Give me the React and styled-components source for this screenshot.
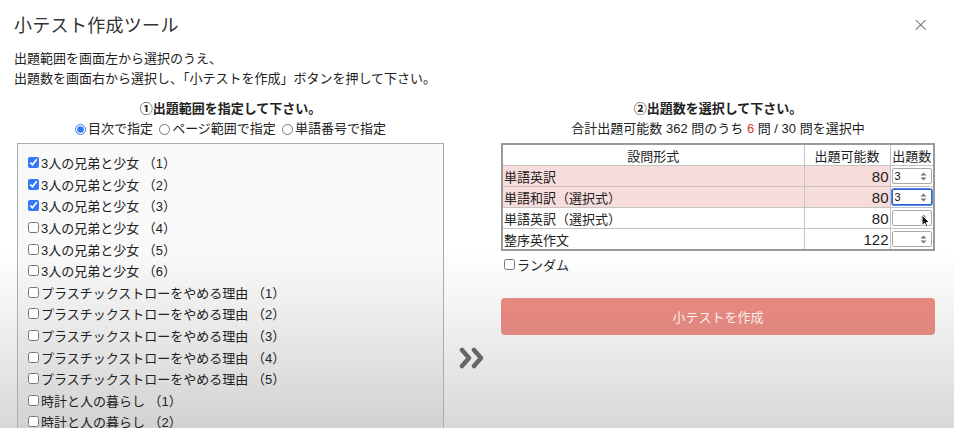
import React from "react";
import styled, { createGlobalStyle } from "styled-components";

const chapters = [
  { label: "3人の兄弟と少女 （1）", checked: true },
  { label: "3人の兄弟と少女 （2）", checked: true },
  { label: "3人の兄弟と少女 （3）", checked: true },
  { label: "3人の兄弟と少女 （4）" },
  { label: "3人の兄弟と少女 （5）" },
  { label: "3人の兄弟と少女 （6）" },
  { label: "プラスチックストローをやめる理由 （1）" },
  { label: "プラスチックストローをやめる理由 （2）" },
  { label: "プラスチックストローをやめる理由 （3）" },
  { label: "プラスチックストローをやめる理由 （4）" },
  { label: "プラスチックストローをやめる理由 （5）" },
  { label: "時計と人の暮らし （1）" },
  { label: "時計と人の暮らし （2）" },
  { label: "時計と人の暮らし （3）" },
];

const questionTypes = [
  { name: "単語英訳", count: 80, value: "3", active: true },
  { name: "単語和訳（選択式）", count: 80, value: "3", active: true, focused: true },
  { name: "単語英訳（選択式）", count: 80, value: "", cursor: true },
  { name: "整序英作文", count: 122, value: "" },
];

const Spinner = () => (
  <svg width="7" height="9" viewBox="0 0 7 9">
    <path d="M3.5 0.5 L6.5 3.5 H0.5 Z" fill="#777" />
    <path d="M3.5 8.5 L6.5 5.5 H0.5 Z" fill="#777" />
  </svg>
);

const Cursor = () => (
  <svg width="10" height="14" viewBox="0 0 10 14">
    <path d="M1 1 L1 11.5 L3.6 9.2 L5.4 13 L7 12.3 L5.3 8.6 L8.6 8.6 Z" fill="#111" stroke="#fff" strokeWidth="1" />
  </svg>
);

const NumberBox = ({ value, focused, cursor }) => (
  <NumberField $focused={focused}>
    <span>{value}</span>
    <Spinner />
    {cursor && (
      <CursorWrap>
        <Cursor />
      </CursorWrap>
    )}
  </NumberField>
);

const App = () => {
  return (
    <>
      <GlobalStyle />
      <Page>
        <Header>
          <Title>小テスト作成ツール</Title>
          <Close>×</Close>
        </Header>

        <Intro>
          出題範囲を画面左から選択のうえ、
          <br />
          出題数を画面右から選択し、「小テストを作成」ボタンを押して下さい。
        </Intro>

        <Columns>
          <SectionHead $area="lhead">
            <Heading>①出題範囲を指定して下さい。</Heading>
            <RadioRow>
              <Choice>
                <Radio type="radio" name="mode" defaultChecked />
                目次で指定
              </Choice>
              <Choice>
                <Radio type="radio" name="mode" />
                ページ範囲で指定
              </Choice>
              <Choice>
                <Radio type="radio" name="mode" />
                単語番号で指定
              </Choice>
            </RadioRow>
          </SectionHead>

          <SectionHead $area="rhead">
            <Heading>②出題数を選択して下さい。</Heading>
            <Summary>
              合計出題可能数 362 問のうち <Red>6</Red> 問 / 30 問を選択中
            </Summary>
          </SectionHead>

          <Panel>
            {chapters.map((c) => (
              <Item key={c.label}>
                <Check type="checkbox" defaultChecked={c.checked} />
                {c.label}
              </Item>
            ))}
          </Panel>

          <ArrowCol>
            <svg width="27" height="22" viewBox="0 0 27 22">
              <path d="M3 3 L10 11 L3 19" fill="none" stroke="#666" strokeWidth="4.5" strokeLinecap="round" strokeLinejoin="round" />
              <path d="M15 3 L22 11 L15 19" fill="none" stroke="#666" strokeWidth="4.5" strokeLinecap="round" strokeLinejoin="round" />
            </svg>
          </ArrowCol>

          <RightBody>
            <Table>
              <colgroup>
                <col />
                <col style={{ width: 86 }} />
                <col style={{ width: 44 }} />
              </colgroup>
              <thead>
                <tr>
                  <Th>設問形式</Th>
                  <Th>出題可能数</Th>
                  <Th>出題数</Th>
                </tr>
              </thead>
              <tbody>
                {questionTypes.map((q) => (
                  <Row key={q.name} $active={q.active}>
                    <Td>{q.name}</Td>
                    <Td $num>{q.count}</Td>
                    <InputCell>
                      <NumberBox value={q.value} focused={q.focused} cursor={q.cursor} />
                    </InputCell>
                  </Row>
                ))}
              </tbody>
            </Table>

            <RandomLabel>
              <Check type="checkbox" />
              ランダム
            </RandomLabel>

            <CreateButton>小テストを作成</CreateButton>
          </RightBody>
        </Columns>
      </Page>
    </>
  );
};

// ===== Styled Components =====

const GlobalStyle = createGlobalStyle`
  html, body {
    margin: 0;
    height: 100%;
  }
  body {
    font-family: "Liberation Sans", "Noto Sans CJK JP", sans-serif;
    color: #222;
    background: linear-gradient(180deg, #fff 0px, #fff 250px, #f1f1f1 320px, #d8d8d8 428px);
    overflow: hidden;
  }
`;

const Page = styled.div`
  padding: 0 19px 0 14px;
`;

const Header = styled.div`
  display: flex;
  justify-content: space-between;
  align-items: center;
  height: 48px;
`;

const Title = styled.h1`
  margin: 0;
  font-size: 18px;
  font-weight: 400;
  color: #333;
  font-family: "Noto Sans CJK JP", sans-serif;
  letter-spacing: 0.3px;
`;

const Close = styled.span`
  margin-right: 6px;
  font-size: 20px;
  color: #777;
  font-family: "DejaVu Sans", sans-serif;
  font-weight: 300;
`;

const Intro = styled.p`
  margin: 1px 0 0;
  font-size: 13px;
  line-height: 20px;
`;

const Columns = styled.div`
  display: grid;
  grid-template-columns: 427px 57px 434px;
  grid-template-areas:
    "lhead . rhead"
    "panel arrow rbody";
  margin: 10px 0 0 3px;
`;

const SectionHead = styled.div`
  grid-area: ${(p) => p.$area};
  text-align: center;
  font-size: 13px;
  line-height: 20px;
  margin-bottom: 4px;
`;

const Heading = styled.div`
  font-weight: 700;
`;

const RadioRow = styled.div`
  display: flex;
  justify-content: center;
  gap: 6px;
`;

const Choice = styled.label`
  display: inline-flex;
  align-items: center;
`;

const Radio = styled.input`
  width: 11px;
  height: 11px;
  margin: 0 2px 0 0;
  accent-color: #3478f6;
`;

const Summary = styled.div``;

const Red = styled.span`
  color: #e0352b;
`;

const Panel = styled.div`
  grid-area: panel;
  height: 320px;
  overflow: hidden;
  border: 1px solid #ababab;
  background: rgba(0, 0, 0, 0.025);
  padding: 8px 10px;
  font-size: 13px;
`;

const Item = styled.label`
  display: flex;
  align-items: center;
  height: 21.6px;
`;

const Check = styled.input`
  width: 11px;
  height: 11px;
  margin: 0 2px 0 0;
  accent-color: #3478f6;
`;

const ArrowCol = styled.div`
  grid-area: arrow;
  display: flex;
  justify-content: center;
  align-items: flex-start;
  padding-top: 204px;
`;

const RightBody = styled.div`
  grid-area: rbody;
  font-size: 13px;
`;

const Table = styled.table`
  width: 100%;
  table-layout: fixed;
  border-collapse: collapse;
  border: 2px solid #9a9a9a;
  background: #fff;
`;

const Th = styled.th`
  font-weight: 400;
  height: 20px;
  padding: 0 1px;
  border: 1px solid #c4c4c4;
  white-space: nowrap;
`;

const Row = styled.tr`
  background: ${(p) => (p.$active ? "#f7dcdc" : "#fff")};
`;

const Td = styled.td`
  height: 20px;
  padding: 0 1px;
  border: 1px solid #c4c4c4;
  text-align: ${(p) => (p.$num ? "right" : "left")};
  font-size: ${(p) => (p.$num ? "15px" : "13px")};
`;

const InputCell = styled.td`
  padding: 0 1px;
  border: 1px solid #c4c4c4;
  background: #fff;
`;

const NumberField = styled.div`
  position: relative;
  display: flex;
  align-items: center;
  justify-content: space-between;
  box-sizing: border-box;
  height: 16px;
  padding: 0 4px 0 2px;
  background: #fff;
  border: 1px solid ${(p) => (p.$focused ? "#2b62c9" : "#a9a9a9")};
  box-shadow: ${(p) => (p.$focused ? "0 0 0 1px #5b8ee6" : "none")};
  border-radius: 2px;
  font-size: 11px;
  color: #111;
`;

const CursorWrap = styled.span`
  position: absolute;
  right: 0;
  top: 3px;
  line-height: 0;
`;

const RandomLabel = styled.label`
  display: flex;
  align-items: center;
  height: 20px;
  margin: 3px 0 0 3px;
`;

const CreateButton = styled.button`
  display: block;
  width: 100%;
  height: 37px;
  margin-top: 24px;
  border: none;
  border-radius: 4px;
  background: linear-gradient(180deg, #e7887e, #df8880);
  color: rgba(255, 255, 255, 0.88);
  font-family: "Noto Sans CJK JP", sans-serif;
  font-size: 13px;
`;

export default App;
